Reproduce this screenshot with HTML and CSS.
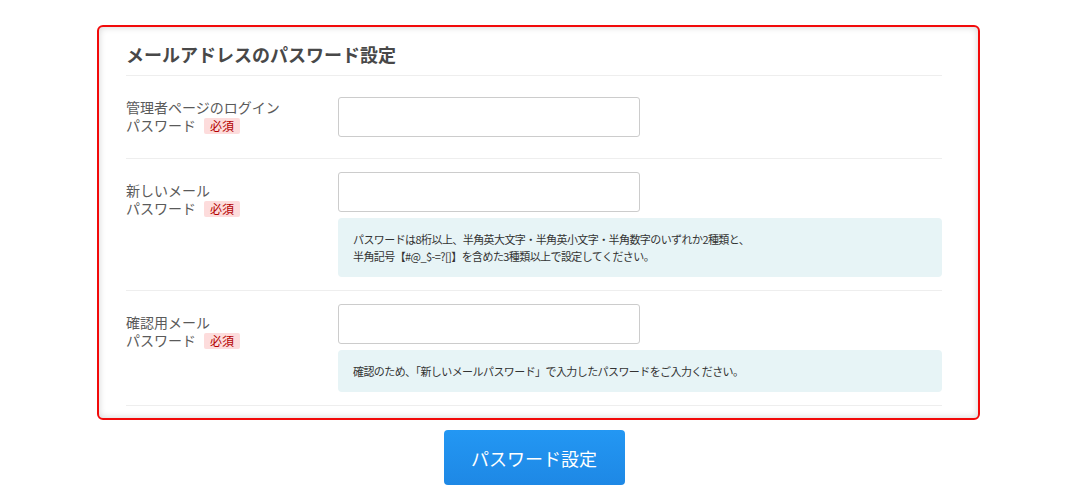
FILE: index.html
```html
<!DOCTYPE html>
<html lang="ja">
<head>
<meta charset="utf-8">
<title>メールアドレスのパスワード設定</title>
<link rel="stylesheet" href="styles.css">
</head>
<body>
<main class="page">
  <section class="card">
    <h2 class="card-title">メールアドレスのパスワード設定</h2>
    <div class="row">
      <div class="label">管理者ページのログイン<br>パスワード<span class="badge">必須</span></div>
      <div class="field field--plain">
        <input class="input" type="password">
      </div>
    </div>
    <div class="row">
      <div class="label">新しいメール<br>パスワード<span class="badge">必須</span></div>
      <div class="field">
        <input class="input" type="password">
        <p class="notice">パスワードは8桁以上、半角英大文字・半角英小文字・半角数字のいずれか2種類と、<br>半角記号【#@_$-=?[]】を含めた3種類以上で設定してください。</p>
      </div>
    </div>
    <div class="row">
      <div class="label">確認用メール<br>パスワード<span class="badge">必須</span></div>
      <div class="field">
        <input class="input" type="password">
        <p class="notice">確認のため、「新しいメールパスワード」で入力したパスワードをご入力ください。</p>
      </div>
    </div>
  </section>
  <div class="actions">
    <button class="btn" type="button">パスワード設定</button>
  </div>
</main>
</body>
</html>
```

FILE: styles.css
```css
html, body {
  margin: 0;
  padding: 0;
  background: #fff;
}

body {
  font-family: "Noto Sans CJK JP", "Noto Sans", sans-serif;
  color: #555;
}

.page {
  padding-top: 25px;
}

.card {
  box-sizing: border-box;
  width: 883px;
  margin-left: 97px;
  padding: 14px 36px 12px 27px;
  border: 2px solid #f20a0a;
  border-radius: 6px;
  box-shadow: inset 0 0 7px rgba(0, 0, 0, 0.18);
  background: #fff;
}

.card-title {
  margin: 0;
  padding-bottom: 8px;
  border-bottom: 1px solid #eee;
  font-size: 18px;
  line-height: 26px;
  font-weight: bold;
  color: #484848;
}

.row {
  display: flex;
  padding: 13px 0;
  border-bottom: 1px solid #eee;
}

.label {
  width: 212px;
  flex: none;
  padding-top: 9px;
  font-size: 14px;
  line-height: 18px;
  color: #5a5a5a;
}

.badge {
  display: inline-block;
  margin-left: 8px;
  padding: 0 6px;
  background: #fddcdc;
  color: #b30000;
  font-size: 12px;
  line-height: 16px;
  border-radius: 2px;
  vertical-align: 0;
}

.field {
  flex: 1;
  display: flex;
  flex-direction: column;
  align-items: flex-start;
}

.field--plain {
  padding: 8px 0;
}

.input {
  box-sizing: border-box;
  width: 302px;
  height: 40px;
  margin: 0;
  border: 1px solid #ccc;
  border-radius: 3px;
  background: #fff;
  font: inherit;
}

.notice {
  box-sizing: border-box;
  align-self: stretch;
  margin: 6px 0 0;
  padding: 13px 15px 12px;
  background: #e7f4f6;
  border-radius: 4px;
  font-size: 11px;
  line-height: 17px;
  letter-spacing: -0.58px;
  color: #333;
}

.actions {
  display: flex;
  justify-content: center;
  padding-top: 10px;
}

.btn {
  width: 181px;
  height: 55px;
  margin-left: -2px;
  border: none;
  border-radius: 4px;
  background: linear-gradient(#2397f3, #1e88e5);
  color: #fff;
  font-family: "Noto Sans CJK JP", sans-serif;
  font-size: 18px;
  cursor: pointer;
}
```
